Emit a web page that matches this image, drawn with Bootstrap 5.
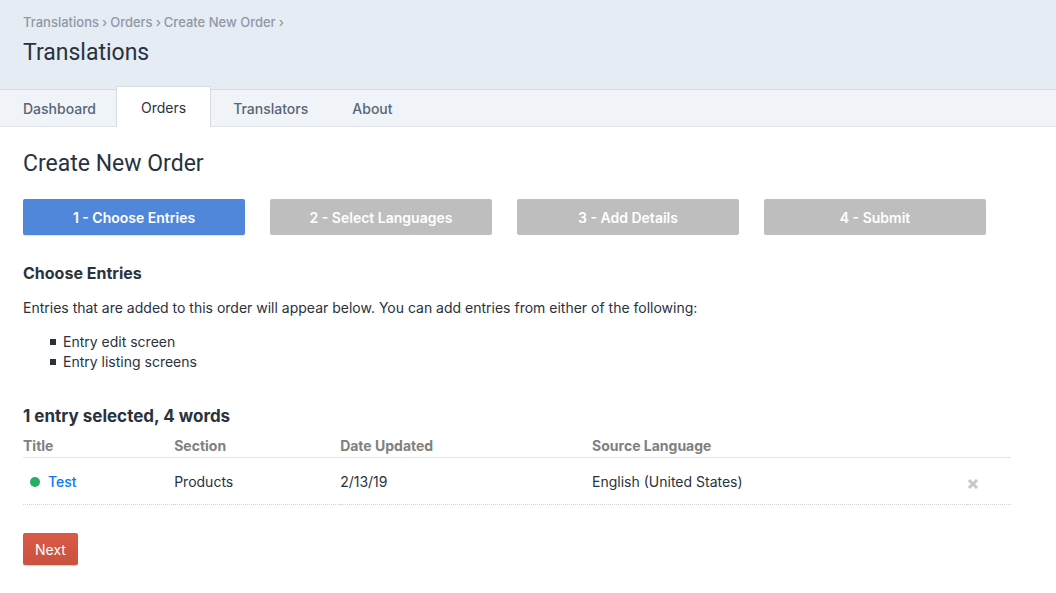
<!DOCTYPE html>
<html lang="en">
<head>
<meta charset="utf-8">
<meta name="viewport" content="width=device-width, initial-scale=1">
<title>Translations - Create New Order</title>
<link rel="stylesheet" href="https://cdn.jsdelivr.net/npm/bootstrap@5.3.0/dist/css/bootstrap.min.css">
<style>
  :root { --gutter: 23px; --ink: #29323d; --muted-blue: #8f98a3; }
  body { font-family: Inter, "Liberation Sans", sans-serif; font-size: 14px; line-height: 20px; color: var(--ink); background: #fff; }
  a { text-decoration: none; }
  .page-header { background: #e5ecf4; padding: 12px var(--gutter) 22px; }
  .crumbs { font-size: 13px; font-weight: 500; }
  .crumbs a { color: var(--muted-blue); }
  .crumbs li { display: flex; }
  .crumbs li::after { content: "›"; color: var(--muted-blue); margin: 0 3px; }
  .page-title { font-family: Roboto, Inter, sans-serif; font-size: 23px; line-height: 28px; font-weight: 400; margin: 7px 0 0; }
  .section-tabs { background: #f0f4f8; border-top: 1px solid #d5dbe3; border-bottom: 1px solid #dfe3e9; height: 38px; }
  .section-tabs .nav-link { color: #576575; font-weight: 500; padding: 9px 22px 7px; }
  .section-tabs li:first-child .nav-link { padding-left: var(--gutter); padding-right: 20px; }
  .section-tabs .nav-link.active { color: var(--ink); font-weight: 400; background: #fff; border: 1px solid #d5dbe3; border-bottom: 0; border-radius: 2px 2px 0 0; margin-top: -4px; padding: 11px 24px 9px; }
  .content { padding: 23px 45px 28px var(--gutter); }
  .steps { display: grid; grid-template-columns: repeat(4, 1fr); gap: 25px; padding-right: 25px; margin: 21px 0 28px; }
  .step { background: #bebebe; color: #fff; font-weight: 600; padding: 9px 12px 7px; line-height: 20px; border-radius: 2px; text-align: center; }
  .step.current { background: #5187da; box-shadow: 0 1px 1px rgba(0, 0, 0, .12); }
  .sub-title { font-size: 16px; line-height: 20px; font-weight: 700; margin: 0; }
  .entry-count { font-size: 17px; }
  .intro { margin: 15px 0 0; }
  .sources { padding-left: 27px; margin: 14px 0 34px; }
  .sources li { display: flex; align-items: center; }
  .sources li::before { content: ""; width: 6px; height: 6px; margin-right: 7px; background: var(--ink); }
  .entries { table-layout: fixed; }
  .entries th, .entries .head-blank { color: #808080; font-weight: 700; padding: 10px 0 1px; border-bottom: 1px solid #e3e5e8; }
  .entries tbody td { padding: 14px 0 12px; border-bottom: 1px dotted #d5d5d5; }
  .entries a { color: #0d78f2; font-weight: 500; }
  .live-dot { width: 10px; height: 10px; border-radius: 50%; background: #27ae60; margin: 0 8px 0 7px; }
  .remove { border: 0; background: none; padding: 0; color: #c8c8c8; display: block; line-height: 20px; }
  .btn-next { background: linear-gradient(#da5a47, #c9523f); color: #fff; font-size: 14px; line-height: 20px; padding: 7px 12px 5px; border: 0; border-radius: 2px; box-shadow: 0 1px 1px rgba(0, 0, 0, .18); }
  .btn-next:hover { background: #c9523f; color: #fff; }
</style>
</head>
<body>
<header class="page-header">
  <nav aria-label="Breadcrumb">
    <ol class="crumbs list-unstyled d-flex flex-wrap mb-0">
      <li><a href="#">Translations</a></li>
      <li><a href="#">Orders</a></li>
      <li><a href="#" aria-current="page">Create New Order</a></li>
    </ol>
  </nav>
  <h1 class="page-title">Translations</h1>
</header>

<nav aria-label="Sections">
  <ul class="nav section-tabs flex-nowrap">
    <li class="nav-item"><a class="nav-link" href="#">Dashboard</a></li>
    <li class="nav-item"><a class="nav-link active" aria-current="page" href="#">Orders</a></li>
    <li class="nav-item"><a class="nav-link" href="#">Translators</a></li>
    <li class="nav-item"><a class="nav-link" href="#">About</a></li>
  </ul>
</nav>

<main class="content">
  <h2 class="page-title mt-0">Create New Order</h2>

  <ol class="steps list-unstyled">
    <li class="step current" aria-current="step">1 - Choose Entries</li>
    <li class="step">2 - Select Languages</li>
    <li class="step">3 - Add Details</li>
    <li class="step">4 - Submit</li>
  </ol>

  <h3 class="sub-title">Choose Entries</h3>
  <p class="intro">Entries that are added to this order will appear below. You can add entries from either of the following:</p>
  <ul class="sources list-unstyled">
    <li>Entry edit screen</li>
    <li>Entry listing screens</li>
  </ul>

  <h3 class="sub-title entry-count">1 entry selected, 4 words</h3>
  <table class="entries w-100">
    <colgroup>
      <col style="width:15.3%"><col style="width:16.8%"><col style="width:25.5%"><col style="width:37.9%"><col style="width:4.5%">
    </colgroup>
    <thead>
      <tr>
        <th scope="col">Title</th>
        <th scope="col">Section</th>
        <th scope="col">Date Updated</th>
        <th scope="col">Source Language</th>
        <td class="head-blank"></td>
      </tr>
    </thead>
    <tbody>
      <tr>
        <td><div class="d-flex align-items-center"><span class="live-dot"></span><a href="#">Test</a></div></td>
        <td>Products</td>
        <td>2/13/19</td>
        <td>English (United States)</td>
        <td>
          <button type="button" class="remove pt-1" aria-label="Remove Test">
            <svg class="d-block" width="12" height="12" viewBox="0 0 12 12" aria-hidden="true"><path d="M3 3l6 6M9 3l-6 6" fill="none" stroke="currentColor" stroke-width="3" stroke-linecap="square"/></svg>
          </button>
        </td>
      </tr>
    </tbody>
  </table>

  <form class="mt-4 pt-1">
    <button type="button" class="btn btn-next">Next</button>
  </form>
</main>
<script src="https://cdn.jsdelivr.net/npm/bootstrap@5.3.0/dist/js/bootstrap.bundle.min.js"></script>
</body>
</html>
